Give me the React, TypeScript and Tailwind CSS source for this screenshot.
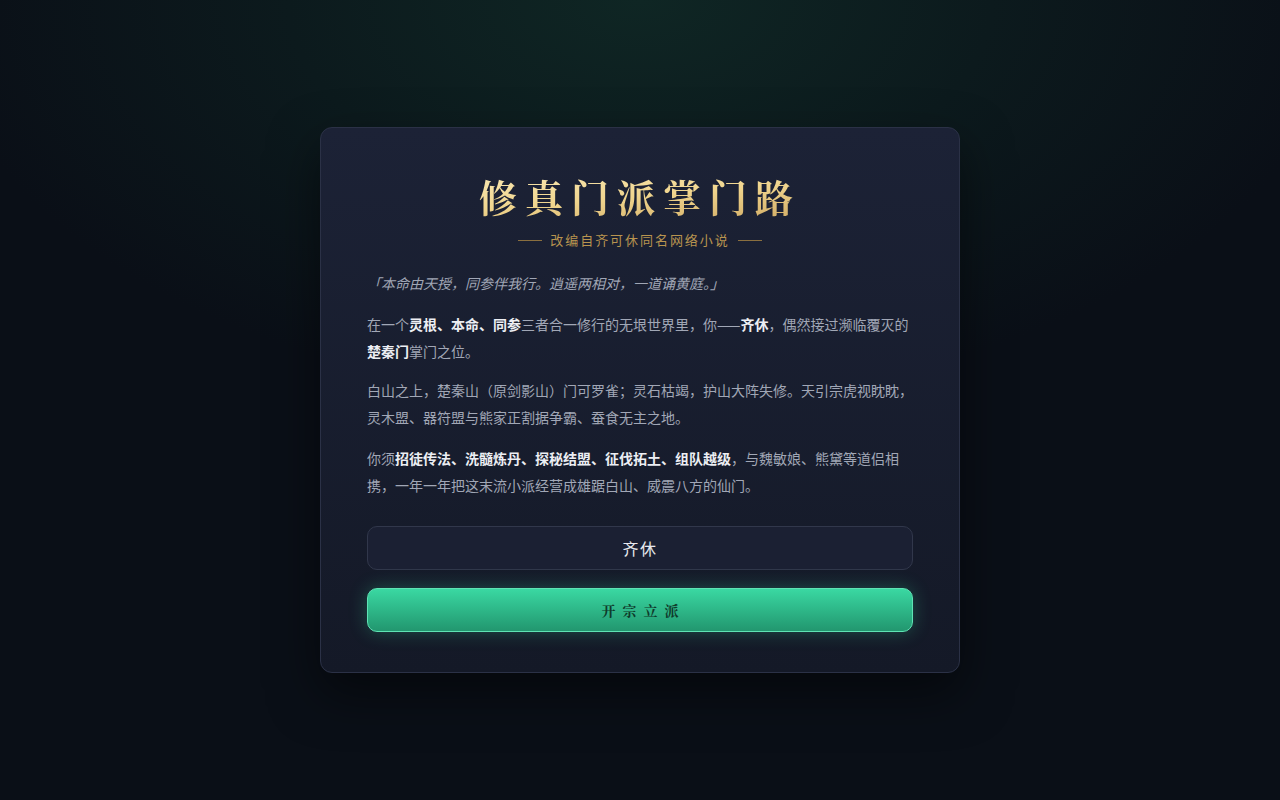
import React, { useState } from 'react';

const serif = { fontFamily: '"Noto Serif CJK SC", "Noto Serif SC", "Liberation Serif", "Noto Sans CJK SC", serif' };

const App: React.FC = () => {
  const [name, setName] = useState('齐休');

  return (
    <div
      className="min-h-screen w-full flex items-center justify-center bg-[#0a0f17] bg-[radial-gradient(ellipse_55%_50%_at_50%_0%,#0f2624_0%,#0c1a1d_50%,#0a0f17_100%)] font-['Noto_Sans_CJK_SC',sans-serif]"
    >
      <div className="w-[640px] rounded-xl border border-[#2b3146] bg-gradient-to-b from-[#1c2236] to-[#141927] px-[46px] pt-[45px] pb-10 shadow-[0_20px_50px_rgba(0,0,0,0.5)]">
        {/* Title */}
        <h1
          className="text-center text-[38px] leading-[46px] font-bold tracking-[0.21em] bg-gradient-to-br from-[#fbedbd] via-[#f0d58e] to-[#caa35c] bg-clip-text text-transparent"
          style={serif}
        >
          修真门派掌门路
        </h1>
        <div className="mt-[11px] flex items-center justify-center gap-2 text-[13px] leading-5 text-[#b8944f]">
          <span className="w-6 h-px bg-[#8a6f3f]"></span>
          <span className="tracking-[0.15em]">改编自齐可休同名网络小说</span>
          <span className="w-6 h-px bg-[#8a6f3f]"></span>
        </div>

        {/* Story */}
        <div className="mt-5 text-[14px] leading-[27px] text-[#a1a7b6]">
          <p className="italic text-[#a0a6b5] mb-3.5">「本命由天授，同参伴我行。逍遥两相对，一道诵黄庭。」</p>
          <p className="mb-3">
            在一个<b className="text-[#eceef3]">灵根、本命、同参</b>三者合一修行的无垠世界里，你——<b className="text-[#eceef3]">齐休</b>，偶然接过濒临覆灭的<b className="text-[#eceef3]">楚秦门</b>掌门之位。
          </p>
          <p className="mb-3.5">
            白山之上，楚秦山（原剑影山）门可罗雀；灵石枯竭，护山大阵失修。天引宗虎视眈眈，灵木盟、器符盟与熊家正割据争霸、蚕食无主之地。
          </p>
          <p>
            你须<b className="text-[#eceef3]">招徒传法、洗髓炼丹、探秘结盟、征伐拓土、组队越级</b>，与魏敏娘、熊黛等道侣相携，一年一年把这末流小派经营成雄踞白山、威震八方的仙门。
          </p>
        </div>

        {/* Name input */}
        <input
          value={name}
          onChange={(e) => setName(e.target.value)}
          className="mt-[27px] w-full h-11 rounded-[10px] border border-[#31374b] bg-[#1b2033] text-center text-[16px] tracking-[0.1em] text-[#e6e8ee] outline-none"
        />

        {/* Start button */}
        <button
          className="mt-[18px] w-full h-11 rounded-[10px] border border-[#5fe3b4] bg-gradient-to-b from-[#3ad8a2] to-[#22976f] text-[14px] font-bold tracking-[0.5em] pl-[0.5em] text-[#0f3a2b] shadow-[0_0_18px_rgba(52,211,153,0.3)]"
          style={serif}
        >
          开宗立派
        </button>
      </div>
    </div>
  );
};

export default App;
